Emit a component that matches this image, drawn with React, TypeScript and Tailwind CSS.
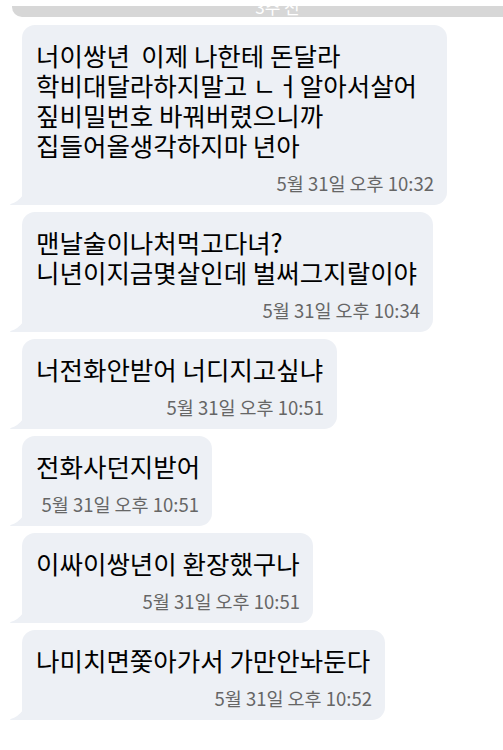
import React from 'react';

interface Message {
  lines: string[];
  time: string;
  width: string;
}

const MESSAGES: Message[] = [
  {
    lines: ['너이쌍년  이제 나한테 돈달라', '학비대달라하지말고 ㄴㅓ알아서살어', '짚비밀번호 바꿔버렸으니까', '집들어올생각하지마 년아'],
    time: '5월 31일 오후 10:32',
    width: 'w-[425px]',
  },
  {
    lines: ['맨날술이나처먹고다녀?', '니년이지금몇살인데 벌써그지랄이야'],
    time: '5월 31일 오후 10:34',
    width: 'w-[411px]',
  },
  {
    lines: ['너전화안받어 너디지고싶냐'],
    time: '5월 31일 오후 10:51',
    width: 'w-[315px]',
  },
  {
    lines: ['전화사던지받어'],
    time: '5월 31일 오후 10:51',
    width: 'w-[190px]',
  },
  {
    lines: ['이싸이쌍년이 환장했구나'],
    time: '5월 31일 오후 10:51',
    width: 'w-[291px]',
  },
  {
    lines: ['나미치면쫓아가서 가만안놔둔다'],
    time: '5월 31일 오후 10:52',
    width: 'w-[363px]',
  },
];

const FONT = "font-['Noto_Sans_CJK_KR','Noto_Sans',sans-serif]";

// little tail sticking out at the bottom-left of each received bubble
function Tail() {
  return (
    <svg className="absolute -left-[13px] bottom-0" width="14" height="10" viewBox="0 0 14 10">
      <path d="M14 0 L14 10 L2 10 Q0 9.6 1.5 9 Q9 7 14 0 Z" fill="#edf0f5" />
    </svg>
  );
}

function Bubble({ msg }: { msg: Message }) {
  return (
    <div className={`relative ${msg.width} rounded-[13px] rounded-bl-none bg-[#edf0f5] pl-[14px] pr-[13px] pt-[15px] pb-[11px]`}>
      <div className="text-[25.5px] leading-[30px] text-black whitespace-pre">
        {msg.lines.map((l, i) => (
          <div key={i}>{l}</div>
        ))}
      </div>
      <div className="mt-[12px] text-right text-[18.5px] leading-[22px] text-[#666]">{msg.time}</div>
      <Tail />
    </div>
  );
}

export default function App() {
  return (
    <div className={`w-[503px] h-[750px] overflow-hidden bg-white ${FONT}`}>
      <div className="pt-[6px] pl-[12px]">
        <div className="h-[11px] overflow-hidden rounded-bl-[10px] bg-[#d7d7d7] flex justify-center">
          <span className="-mt-[9px] ml-[40px] text-[17px] leading-[20px] text-white">3주 전</span>
        </div>
      </div>
      <div className="flex flex-col items-start gap-[7px] pl-[22px] pt-[8px]">
        {MESSAGES.map((m, i) => (
          <Bubble key={i} msg={m} />
        ))}
      </div>
    </div>
  );
}
